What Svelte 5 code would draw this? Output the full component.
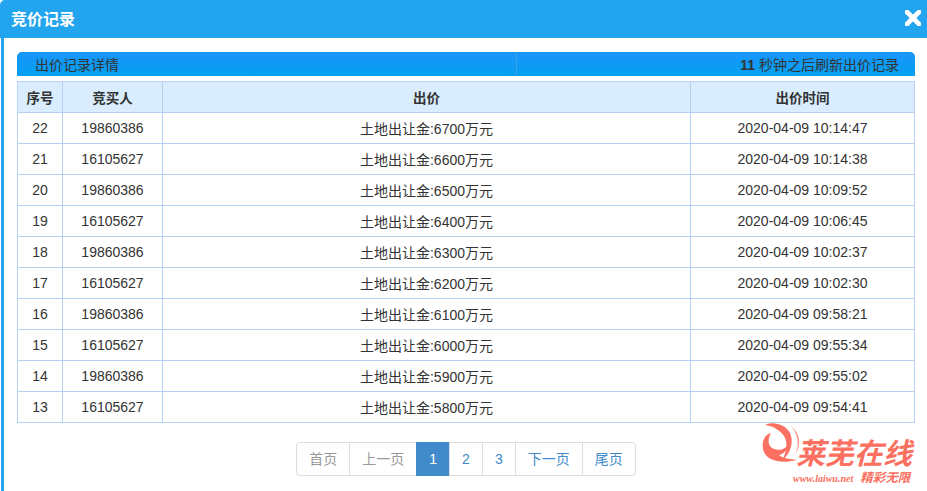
<script>
  const rows = [
    [22, '19860386', 6700, '10:14:47'],
    [21, '16105627', 6600, '10:14:38'],
    [20, '19860386', 6500, '10:09:52'],
    [19, '16105627', 6400, '10:06:45'],
    [18, '19860386', 6300, '10:02:37'],
    [17, '16105627', 6200, '10:02:30'],
    [16, '19860386', 6100, '09:58:21'],
    [15, '16105627', 6000, '09:55:34'],
    [14, '19860386', 5900, '09:55:02'],
    [13, '16105627', 5800, '09:54:41']
  ]
  const pages = [
    { label: '首页', off: true },
    { label: '上一页', off: true },
    { label: '1', active: true },
    { label: '2' },
    { label: '3' },
    { label: '下一页' },
    { label: '尾页' }
  ]
</script>

<div class="dialog">
  <header class="title">
    <h1>竞价记录</h1>
    <svg class="close" viewBox="0 0 16 16" width="16" height="16">
      <path d="M2 2 14 14M14 2 2 14" stroke="#fff" stroke-width="4.6" stroke-linecap="round" fill="none"/>
    </svg>
  </header>

  <div class="content">
    <div class="bar">
      <div class="bar-left">出价记录详情</div>
      <div class="bar-right"><b>11</b> 秒钟之后刷新出价记录</div>
    </div>

    <table>
      <colgroup>
        <col style="width:45px" />
        <col style="width:100px" />
        <col style="width:528px" />
        <col />
      </colgroup>
      <thead>
        <tr><th>序号</th><th>竞买人</th><th>出价</th><th>出价时间</th></tr>
      </thead>
      <tbody>
        {#each rows as r}
          <tr>
            <td>{r[0]}</td>
            <td>{r[1]}</td>
            <td>土地出让金:{r[2]}万元</td>
            <td>2020-04-09 {r[3]}</td>
          </tr>
        {/each}
      </tbody>
    </table>

    <ul class="pagination">
      {#each pages as p}
        <li class:off={p.off} class:active={p.active}>{p.label}</li>
      {/each}
    </ul>
  </div>

  <div class="watermark">
    <svg viewBox="0 0 60 60" width="60" height="60">
      <path d="M16 15C8 17 6 27 9 34c4 9 17 12 33 8-8-1-15-2-18-5 5-1 9-6 9-11-2 5-8 7-14 5-6-2-7-9-3-16z" fill="#fb7060"/>
      <path d="M10 7c8-4 20-1 25 8 4 8 1 21-8 27 5-8 6-18 2-24C25 12 18 8 10 7z" fill="#fb7060"/>
      <path d="M36 8c7 7 9 20 4 29 7-10 5-22-4-29z" fill="#fb9082"/>
    </svg>
    <div class="wm-text">
      <div class="wm-name">莱芜在线</div>
      <div class="wm-sub"><span>www.laiwu.net</span><i>精彩无限</i></div>
    </div>
  </div>
</div>

<style>
  :global(body) {
    margin: 0;
    background: #fff;
    overflow: hidden;
  }
  .dialog {
    position: relative;
    box-sizing: border-box;
    width: 927px;
    height: 491px;
    background: #fff;
    font-family: "Liberation Sans", "Noto Sans CJK SC", sans-serif;
    font-size: 14px;
    color: #333;
    overflow: hidden;
  }
  .title {
    height: 38px;
    background: #23a4ee;
    border-top-left-radius: 5px;
    display: flex;
    align-items: center;
    justify-content: space-between;
    padding: 0 6px 3px 11px;
    box-sizing: border-box;
  }
  .title h1 {
    margin: 0;
    font-size: 16px;
    font-weight: 700;
    color: #fff;
  }
  .content {
    height: 453px;
    box-sizing: border-box;
    margin-left: 1px;
    border-left: 3px solid #23a4ee;
    padding: 14px 12px 0 13px;
  }
  .bar {
    display: flex;
    height: 24px;
    line-height: 26px;
    color: #333;
    border-radius: 5px 5px 0 0;
    background: linear-gradient(#1a95f9, #04a0f2);
    overflow: hidden;
  }
  .bar-left {
    width: 500px;
    padding-left: 18px;
    box-sizing: border-box;
    border-right: 1px solid #3aa3e8;
  }
  .bar-right {
    flex: 1;
    text-align: right;
    padding-right: 16px;
  }
  table {
    width: 898px;
    margin-top: 5px;
    border-collapse: collapse;
    table-layout: fixed;
    border: 1px solid #b5d2f5;
  }
  th, td {
    height: 30px;
    padding: 0;
    text-align: center;
    border: 1px solid #b5d2f5;
    font-size: 14px;
    font-weight: 400;
  }
  th {
    background: #d9edfe;
    font-weight: 700;
    font-size: 13.5px;
  }
  .pagination {
    list-style: none;
    margin: 19px auto 0;
    padding: 0;
    width: max-content;
    display: flex;
  }
  li {
    height: 34px;
    box-sizing: border-box;
    padding: 0 12px;
    margin-left: -1px;
    border: 1px solid #ddd;
    line-height: 32px;
    color: #428bca;
    background: #fff;
  }
  li:first-child {
    margin-left: 0;
    border-radius: 4px 0 0 4px;
  }
  li:last-child {
    border-radius: 0 4px 4px 0;
  }
  li.off {
    color: #999;
  }
  li.active {
    background: #428bca;
    border-color: #428bca;
    color: #fff;
  }
  .watermark {
    position: absolute;
    left: 755px;
    top: 418px;
    display: flex;
    color: #fb7060;
    pointer-events: none;
  }
  .watermark svg {
    flex: none;
  }
  .wm-text {
    margin: 20px 0 0 -22px;
  }
  .wm-name {
    font-size: 29px;
    line-height: 32px;
    margin-left: 3px;
    font-weight: 700;
    font-style: italic;
    white-space: nowrap;
  }
  .wm-sub {
    display: flex;
    gap: 7px;
    margin-top: 2px;
    font-size: 12.5px;
    line-height: 13px;
    font-weight: 700;
    font-style: italic;
    white-space: nowrap;
  }
  .wm-sub span {
    font-size: 10px;
    font-family: "Liberation Serif", serif;
  }
</style>
